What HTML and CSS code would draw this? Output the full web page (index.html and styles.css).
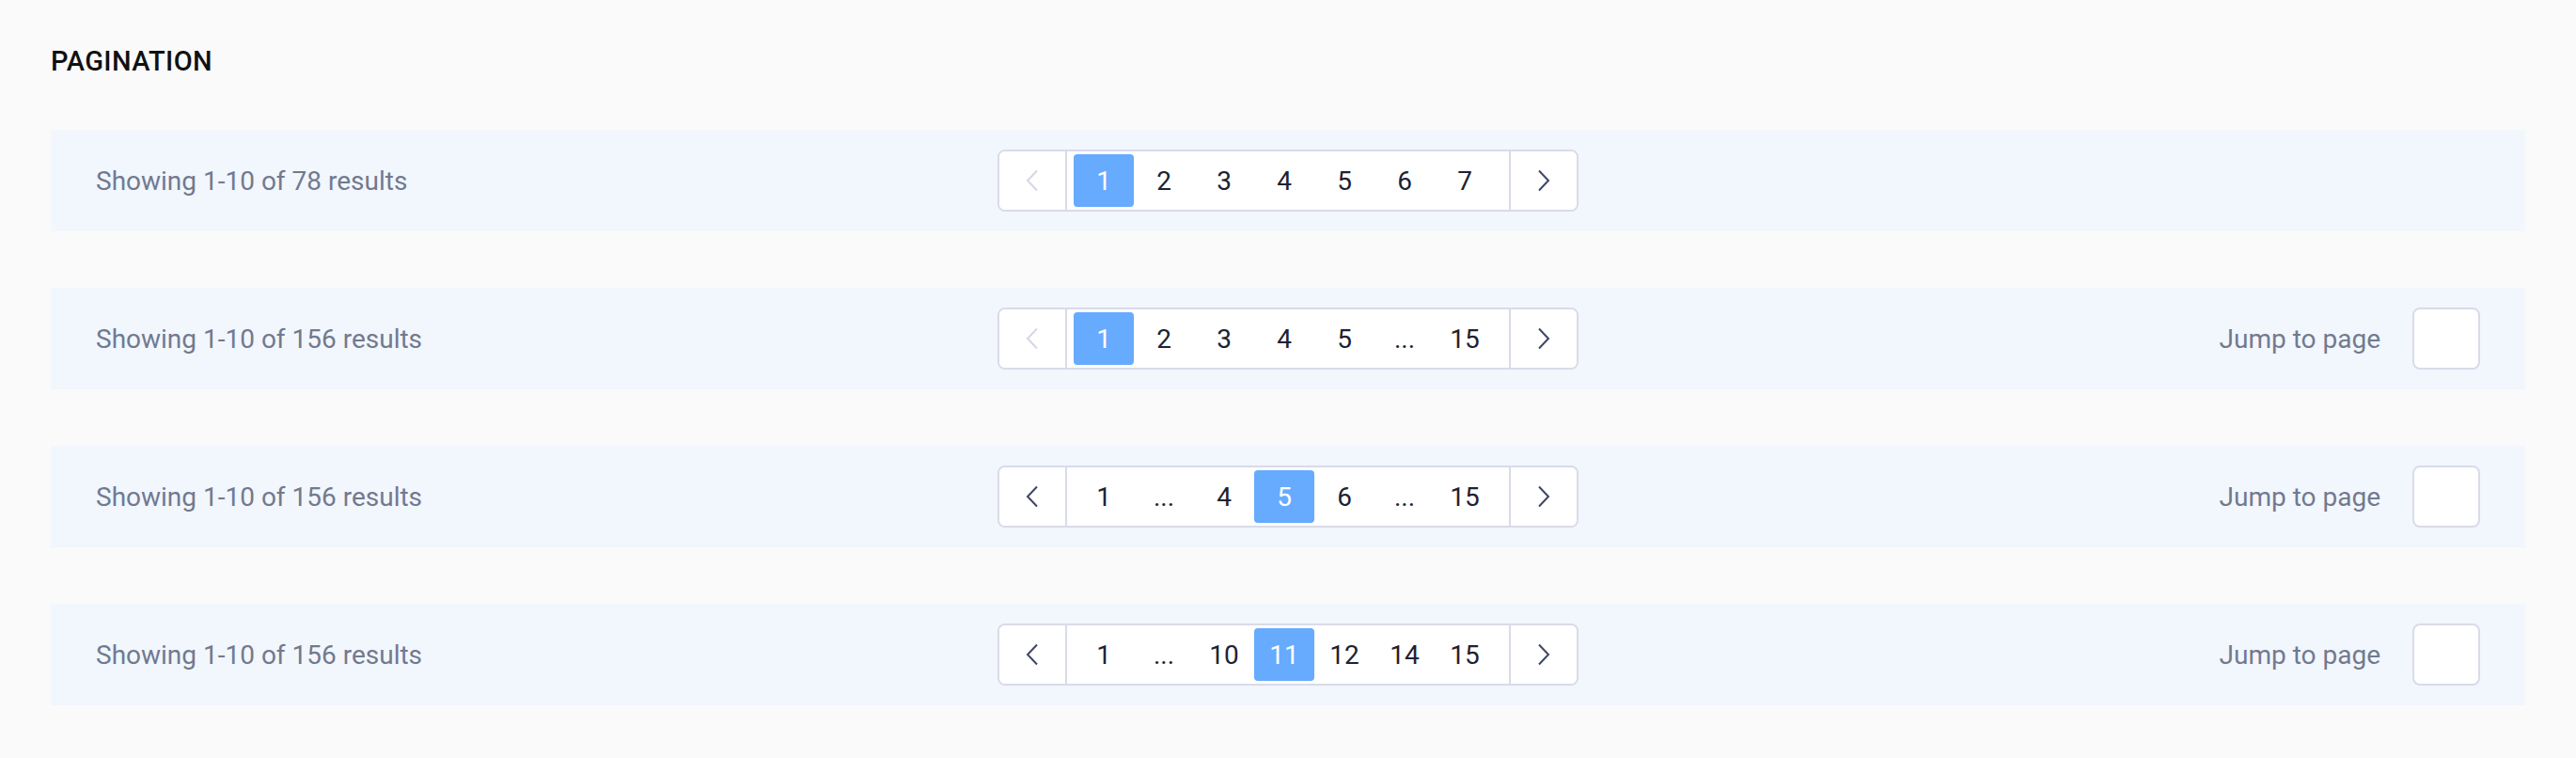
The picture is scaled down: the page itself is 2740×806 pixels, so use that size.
FILE: index.html
```html
<!DOCTYPE html>
<html lang="en">
<head>
<meta charset="utf-8">
<title>Pagination</title>
<link rel="stylesheet" href="styles.css">
</head>
<body>
<main class="page">
  <h1 class="title">PAGINATION</h1>
  <div class="list">
    <section class="bar">
      <div class="summary">Showing 1-10 of 78 results</div>
      <nav class="pager">
        <button class="arrow arrow-prev disabled" aria-label="Previous">
          <svg width="14" height="24" viewBox="0 0 14 24"><polyline points="12,1.5 2,12 12,22.5" fill="none" stroke="currentColor" stroke-width="2"/></svg>
        </button>
        <div class="pages">
          <span class="page-item active">1</span>
          <span class="page-item">2</span>
          <span class="page-item">3</span>
          <span class="page-item">4</span>
          <span class="page-item">5</span>
          <span class="page-item">6</span>
          <span class="page-item">7</span>
        </div>
        <button class="arrow arrow-next" aria-label="Next">
          <svg width="14" height="24" viewBox="0 0 14 24"><polyline points="2,1.5 12,12 2,22.5" fill="none" stroke="currentColor" stroke-width="2"/></svg>
        </button>
      </nav>
      <div class="jump"></div>
    </section>

    <section class="bar">
      <div class="summary">Showing 1-10 of 156 results</div>
      <nav class="pager">
        <button class="arrow arrow-prev disabled" aria-label="Previous">
          <svg width="14" height="24" viewBox="0 0 14 24"><polyline points="12,1.5 2,12 12,22.5" fill="none" stroke="currentColor" stroke-width="2"/></svg>
        </button>
        <div class="pages">
          <span class="page-item active">1</span>
          <span class="page-item">2</span>
          <span class="page-item">3</span>
          <span class="page-item">4</span>
          <span class="page-item">5</span>
          <span class="page-item">...</span>
          <span class="page-item">15</span>
        </div>
        <button class="arrow arrow-next" aria-label="Next">
          <svg width="14" height="24" viewBox="0 0 14 24"><polyline points="2,1.5 12,12 2,22.5" fill="none" stroke="currentColor" stroke-width="2"/></svg>
        </button>
      </nav>
      <div class="jump"><span class="jump-label">Jump to page</span><input class="jump-input" type="text"></div>
    </section>

    <section class="bar">
      <div class="summary">Showing 1-10 of 156 results</div>
      <nav class="pager">
        <button class="arrow arrow-prev" aria-label="Previous">
          <svg width="14" height="24" viewBox="0 0 14 24"><polyline points="12,1.5 2,12 12,22.5" fill="none" stroke="currentColor" stroke-width="2"/></svg>
        </button>
        <div class="pages">
          <span class="page-item">1</span>
          <span class="page-item">...</span>
          <span class="page-item">4</span>
          <span class="page-item active">5</span>
          <span class="page-item">6</span>
          <span class="page-item">...</span>
          <span class="page-item">15</span>
        </div>
        <button class="arrow arrow-next" aria-label="Next">
          <svg width="14" height="24" viewBox="0 0 14 24"><polyline points="2,1.5 12,12 2,22.5" fill="none" stroke="currentColor" stroke-width="2"/></svg>
        </button>
      </nav>
      <div class="jump"><span class="jump-label">Jump to page</span><input class="jump-input" type="text"></div>
    </section>

    <section class="bar">
      <div class="summary">Showing 1-10 of 156 results</div>
      <nav class="pager">
        <button class="arrow arrow-prev" aria-label="Previous">
          <svg width="14" height="24" viewBox="0 0 14 24"><polyline points="12,1.5 2,12 12,22.5" fill="none" stroke="currentColor" stroke-width="2"/></svg>
        </button>
        <div class="pages">
          <span class="page-item">1</span>
          <span class="page-item">...</span>
          <span class="page-item">10</span>
          <span class="page-item active">11</span>
          <span class="page-item">12</span>
          <span class="page-item">14</span>
          <span class="page-item">15</span>
        </div>
        <button class="arrow arrow-next" aria-label="Next">
          <svg width="14" height="24" viewBox="0 0 14 24"><polyline points="2,1.5 12,12 2,22.5" fill="none" stroke="currentColor" stroke-width="2"/></svg>
        </button>
      </nav>
      <div class="jump"><span class="jump-label">Jump to page</span><input class="jump-input" type="text"></div>
    </section>
  </div>
</main>
</body>
</html>
```

FILE: styles.css
```css
* { box-sizing: border-box; }

html, body {
  margin: 0;
  padding: 0;
  background: #fafafa;
  font-family: Roboto, "Liberation Sans", Arial, sans-serif;
}

.page {
  padding: 48px 54px 0;
}

.title {
  margin: 0 0 56px;
  font-size: 29px;
  line-height: 34px;
  font-weight: 500;
  color: #111111;
  letter-spacing: 0.4px;
}

.list {
  display: flex;
  flex-direction: column;
  gap: 60px;
}

.bar {
  height: 108px;
  background: #f2f6fd;
  padding: 0 48px;
  display: grid;
  grid-template-columns: 1fr auto 1fr;
  align-items: center;
}

.summary {
  font-size: 28px;
  color: #717a8f;
}

.pager {
  display: flex;
  height: 66px;
  border: 2px solid #d9dbe9;
  border-radius: 8px;
  background: #ffffff;
  overflow: hidden;
}

.arrow {
  width: 72px;
  height: 100%;
  margin: 0;
  padding: 0;
  border: 0;
  background: #ffffff;
  display: flex;
  align-items: center;
  justify-content: center;
  color: #3d4766;
  cursor: pointer;
}

.arrow-prev { border-right: 2px solid #d9dbe9; }
.arrow-next { border-left: 2px solid #d9dbe9; }
.arrow.disabled { color: #d5d7e5; cursor: default; }

.pages {
  width: 470px;
  display: flex;
  align-items: center;
  padding-left: 7px;
}

.page-item {
  width: 64px;
  height: 56px;
  display: flex;
  align-items: center;
  justify-content: center;
  font-size: 28px;
  color: #1f2230;
  border-radius: 4px;
}

.page-item.active {
  background: #66abff;
  color: #ffffff;
}

.jump {
  justify-self: end;
  display: flex;
  align-items: center;
  gap: 34px;
}

.jump-label {
  font-size: 28px;
  color: #717a8f;
}

.jump-input {
  width: 72px;
  height: 66px;
  border: 2px solid #d9dbe9;
  border-radius: 8px;
  background: #ffffff;
  font-family: inherit;
  font-size: 28px;
  padding: 0 8px;
  margin: 0;
  outline: none;
}
```
